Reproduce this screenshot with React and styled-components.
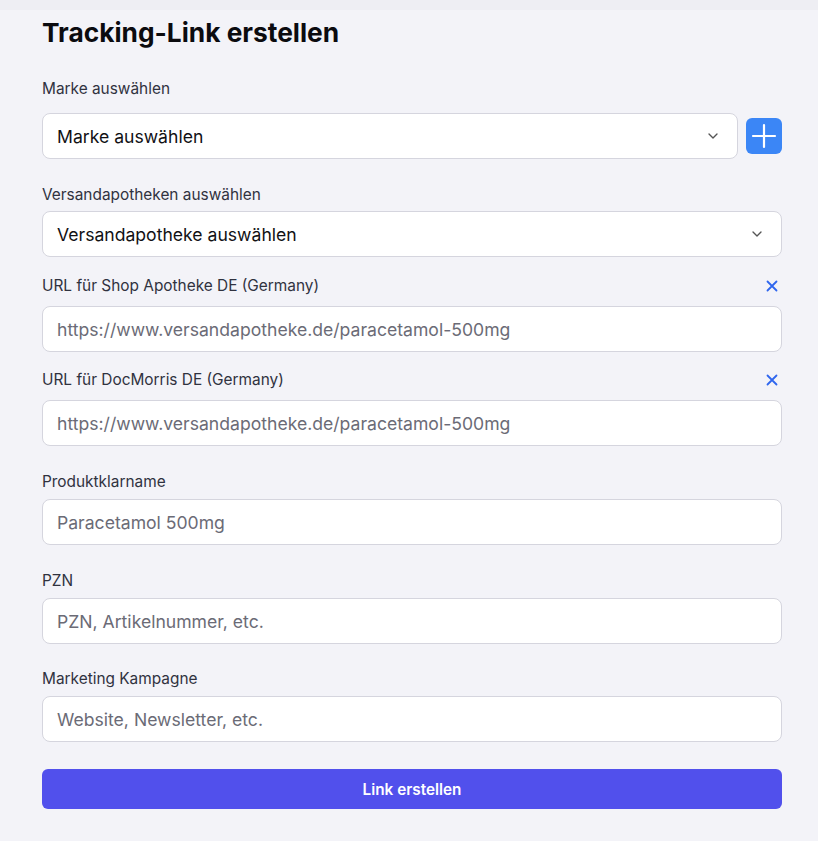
import React from "react";
import styled, { createGlobalStyle } from "styled-components";

const Global = createGlobalStyle`
  * { box-sizing: border-box; }
  body {
    margin: 0;
    background: #f3f3f8;
    font-family: Inter, "Noto Sans", sans-serif;
    color: #111827;
  }
`;

const TopEdge = styled.div`
  height: 10px;
  background: #eeeef3;
`;

const Page = styled.div`
  width: 740px;
  margin-left: 42px;
  padding-bottom: 32px;
`;

const Title = styled.h1`
  margin: 7px 0 0;
  font-size: 26.3px;
  line-height: 32px;
  font-weight: 700;
  color: #0b0b0f;
`;

const Field = styled.div`
  margin-top: ${(p) => p.$top}px;
`;

const LabelRow = styled.div`
  display: flex;
  align-items: center;
  justify-content: space-between;
  height: ${(p) => (p.$tall ? 24 : 20)}px;
  margin-bottom: ${(p) => p.$gap}px;
`;

const Label = styled.label`
  font-size: 15.4px;
  line-height: 20px;
  font-weight: 400;
  color: #30323f;
`;

const Remove = styled.button`
  border: 0;
  background: none;
  padding: 0;
  width: 20px;
  height: 20px;
  display: flex;
  align-items: center;
  justify-content: center;
  cursor: pointer;
`;

const SelectRow = styled.div`
  display: flex;
  align-items: center;
  gap: 8px;
`;

const Box = styled.div`
  flex: 1;
  height: 46px;
  background: #fff;
  border: 1px solid #d5d5de;
  border-radius: 8px;
  display: flex;
  align-items: center;
  justify-content: space-between;
  padding: 0 16px 0 14px;
  font-size: 17.6px;
  color: ${(p) => (p.$placeholder ? "#6b6b76" : "#111114")};
`;

const AddButton = styled.button`
  width: 36px;
  height: 36px;
  border: 0;
  border-radius: 6px;
  background: #3b86f6;
  display: flex;
  align-items: center;
  justify-content: center;
  padding: 0;
`;

const Submit = styled.button`
  margin-top: 27px;
  width: 100%;
  height: 40px;
  border: 0;
  border-radius: 6px;
  background: #5150ec;
  color: #fff;
  font-family: Inter, "Noto Sans", sans-serif;
  font-size: 15.3px;
  font-weight: 600;
`;

const Chevron = () => (
  <svg width="16" height="16" viewBox="0 0 24 24" fill="none" stroke="#555" strokeWidth="2" strokeLinecap="round" strokeLinejoin="round">
    <path d="m6 9 6 6 6-6" />
  </svg>
);

const Cross = () => (
  <svg width="12" height="12" viewBox="0 0 12 12" fill="none" stroke="#2f66ee" strokeWidth="1.8" strokeLinecap="round">
    <path d="M1.5 1.5l9 9M10.5 1.5l-9 9" />
  </svg>
);

const Plus = () => (
  <svg width="26" height="26" viewBox="0 0 26 26" fill="none" stroke="#fff" strokeWidth="2.2" strokeLinecap="round">
    <path d="M13 2v22M2 13h22" />
  </svg>
);

const fields = [
  { label: "Produktklarname", placeholder: "Paracetamol 500mg", top: 26 },
  { label: "PZN", placeholder: "PZN, Artikelnummer, etc.", top: 26 },
  { label: "Marketing Kampagne", placeholder: "Website, Newsletter, etc.", top: 25 },
];

const urls = [
  { label: "URL für Shop Apotheke DE (Germany)", top: 17 },
  { label: "URL für DocMorris DE (Germany)", top: 16 },
];

export default function App() {
  return (
    <>
      <Global />
      <TopEdge />
      <Page>
        <Title>Tracking-Link erstellen</Title>

        <Field $top={30}>
          <LabelRow $gap={14}>
            <Label>Marke auswählen</Label>
          </LabelRow>
          <SelectRow>
            <Box>
              Marke auswählen
              <Chevron />
            </Box>
            <AddButton aria-label="Marke hinzufügen">
              <Plus />
            </AddButton>
          </SelectRow>
        </Field>

        <Field $top={26}>
          <LabelRow $gap={6}>
            <Label>Versandapotheken auswählen</Label>
          </LabelRow>
          <Box>
            Versandapotheke auswählen
            <Chevron />
          </Box>
        </Field>

        {urls.map((u) => (
          <Field key={u.label} $top={u.top}>
            <LabelRow $tall $gap={8}>
              <Label>{u.label}</Label>
              <Remove aria-label="Entfernen">
                <Cross />
              </Remove>
            </LabelRow>
            <Box $placeholder>https://www.versandapotheke.de/paracetamol-500mg</Box>
          </Field>
        ))}

        {fields.map((f) => (
          <Field key={f.label} $top={f.top}>
            <LabelRow $gap={7}>
              <Label>{f.label}</Label>
            </LabelRow>
            <Box $placeholder>{f.placeholder}</Box>
          </Field>
        ))}

        <Submit>Link erstellen</Submit>
      </Page>
    </>
  );
}
